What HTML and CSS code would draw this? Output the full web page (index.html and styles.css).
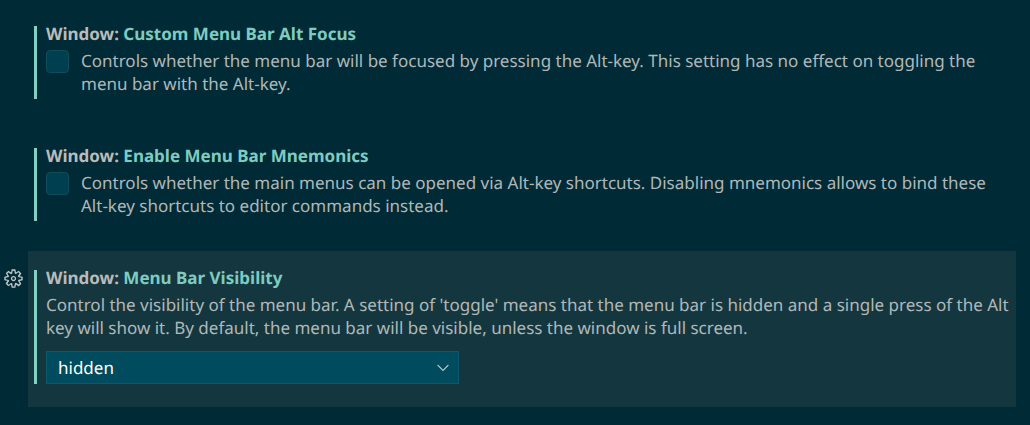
FILE: index.html
```html
<!DOCTYPE html>
<html lang="en">
<head>
<meta charset="utf-8">
<title>Settings</title>
<link rel="stylesheet" href="styles.css">
</head>
<body>
<main class="settings">
  <section class="setting">
    <div class="setting-body">
      <h2 class="title"><span class="category">Window: </span>Custom Menu Bar Alt Focus</h2>
      <div class="option">
        <input class="check" type="checkbox" id="alt-focus">
        <label class="description" for="alt-focus">Controls whether the menu bar will be focused by pressing the Alt-key. This setting has no effect on toggling the menu bar with the Alt-key.</label>
      </div>
    </div>
  </section>
  <section class="setting">
    <div class="setting-body">
      <h2 class="title"><span class="category">Window: </span>Enable Menu Bar Mnemonics</h2>
      <div class="option">
        <input class="check" type="checkbox" id="mnemonics">
        <label class="description" for="mnemonics">Controls whether the main menus can be opened via Alt-key shortcuts. Disabling mnemonics allows to bind these Alt-key shortcuts to editor commands instead.</label>
      </div>
    </div>
  </section>
  <section class="setting focused">
    <button class="gear" type="button" aria-label="More actions">
      <svg viewBox="0 0 16 16" width="21" height="21" fill="currentColor" fill-rule="evenodd">
        <path d="M9.1 4.4L8.6 2H7.4l-.5 2.400-.7.300-2-1.300-.9.800 1.300 2-.2.700-2.400.500v1.200l2.400.500.3.800-1.300 2 .8.800 2-1.300.8.300.4 2.300h1.200l.5-2.400.8-.3 2 1.300.8-.8-1.300-2 .3-.8 2.300-.4V7.400l-2.400-.5-.3-.8 1.300-2-.8-.8-2 1.300-.7-.2zM9.400 1l.5 2.400L12 2.100l2 2-1.400 2.100 2.400.4v2.800l-2.400.5L14 12l-2 2-2.100-1.400-.5 2.400H6.600l-.5-2.400L4 13.900l-2-2 1.400-2.100L1 9.400V6.600l2.400-.5L2.100 4l2-2 2.100 1.400.4-2.400h2.800zm.6 7c0 1.100-.9 2-2 2s-2-.9-2-2 .9-2 2-2 2 .9 2 2zM8 9c.6 0 1-.4 1-1s-.4-1-1-1-1 .4-1 1 .4 1 1 1z"/>
      </svg>
    </button>
    <div class="setting-body">
      <h2 class="title"><span class="category">Window: </span>Menu Bar Visibility</h2>
      <label class="description" for="visibility">Control the visibility of the menu bar. A setting of 'toggle' means that the menu bar is hidden and a single press of the Alt key will show it. By default, the menu bar will be visible, unless the window is full screen.</label>
      <div class="picker">
        <select class="select" id="visibility">
          <option>hidden</option>
          <option>visible</option>
          <option>toggle</option>
        </select>
        <svg class="chevron" viewBox="0 0 12 8" width="12" height="8" fill="none" stroke="currentColor" stroke-width="1.1"><path d="M.6 1 6 6.400l5.400-5.400"/></svg>
      </div>
    </div>
  </section>
</main>
</body>
</html>
```
FILE: styles.css
```css
* { box-sizing: border-box; }
body {
  margin: 0;
  background: #002b36;
  color: #b1b7b9;
  font: 17px/23px "Noto Sans", sans-serif;
  text-rendering: geometricPrecision;
}
.settings { padding: 7px 14px 12px 28px; }
.setting { position: relative; padding: 19px 2px 23px 6px; margin-bottom: 7px; }
.setting-body { border-left: 3px solid #83d0c5; padding-left: 9px; }
.title { margin: 0; font-size: 17px; line-height: 16px; padding-bottom: 7px; color: #7fcbc0; }
.category { color: #bbbbbb; }
.option { display: flex; gap: 12px; padding-bottom: 4px; }
.check {
  appearance: none; flex: none; width: 23px; height: 23px; margin: 1px 0 0;
  background: #003f4f; border: 1px solid #104d5a; border-radius: 4px;
}
.description { display: block; }
.focused { background: #14373f; }
.gear {
  position: absolute; left: -25px; top: 17px; width: 21px; height: 21px;
  padding: 0; border: 0; background: none; color: #c2c8ca;
}
.gear svg { display: block; }
.picker { display: grid; align-items: center; width: 413px; max-width: 100%; margin-top: 12px; }
.select, .chevron { grid-area: 1 / 1; }
.select {
  appearance: none; width: 100%; height: 33px; padding: 0 36px 0 11px;
  background: #004b5d; border: 1px solid #0b5a6b; border-radius: 0;
  color: #fff; font: inherit; text-rendering: inherit;
}
.chevron { justify-self: end; margin-right: 10px; color: #bbc5c8; pointer-events: none; }
```
